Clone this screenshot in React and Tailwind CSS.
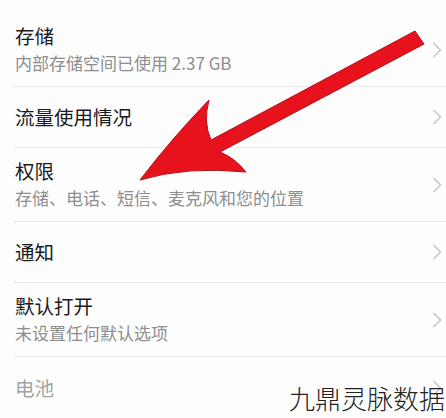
import React from 'react'

const rows = [
  { title: '存储', sub: '内部存储空间已使用 2.37 GB' },
  { title: '流量使用情况' },
  { title: '权限', sub: '存储、电话、短信、麦克风和您的位置' },
  { title: '通知' },
  { title: '默认打开', sub: '未设置任何默认选项' },
  { title: '电池', muted: true },
]

const Chevron = () => (
  <svg className="w-[10px] h-[16px] shrink-0" viewBox="0 0 10 16" fill="none" stroke="#c2c2c2" strokeWidth={1.4}>
    <path d="M1.5 1 L8.5 8 L1.5 15" />
  </svg>
)

const Arrow = () => (
  <svg className="absolute inset-0 w-[446px] h-[418px] pointer-events-none" viewBox="0 0 446 418">
    <path
      d="M140 180 Q172 138 209 100 Q203 122 211 140 L415 31 L424 44 L220 152 Q235 158 246 172 Q186 166 140 180 Z"
      fill="#e8121d"
      stroke="#b01019"
      strokeWidth={1}
      strokeLinejoin="round"
    />
  </svg>
)

export default function App() {
  return (
    <div
      className="relative w-[446px] h-[418px] overflow-hidden bg-[#fdfdfd]"
      style={{ fontFamily: '"Noto Sans CJK SC", "Noto Sans", sans-serif' }}
    >
      <div className="pt-[13px]">
        {rows.map((row, i) => (
          <div key={i} className="pl-[14px]">
            <div className={`flex items-center pr-[4px] ${row.sub ? 'h-[74px]' : 'h-[61px]'} ${i < rows.length - 1 ? 'border-b border-[#e9e9e9]' : ''}`}>
              <div className="flex-1 pl-[1px]">
                <div className={`text-[19.5px] leading-[26px] ${row.muted ? 'text-[#a3a3a3]' : 'text-[#1a1a1a]'}`}>
                  {row.title}
                </div>
                {row.sub && (
                  <div className="mt-[1px] text-[17px] leading-[26px] text-[#8e8e8e]">{row.sub}</div>
                )}
              </div>
              <Chevron />
            </div>
          </div>
        ))}
      </div>
      <Arrow />
      <div className="absolute right-[1px] bottom-[3px] text-[26px] leading-[34px] font-light text-[#222]">
        九鼎灵脉数据
      </div>
    </div>
  )
}
